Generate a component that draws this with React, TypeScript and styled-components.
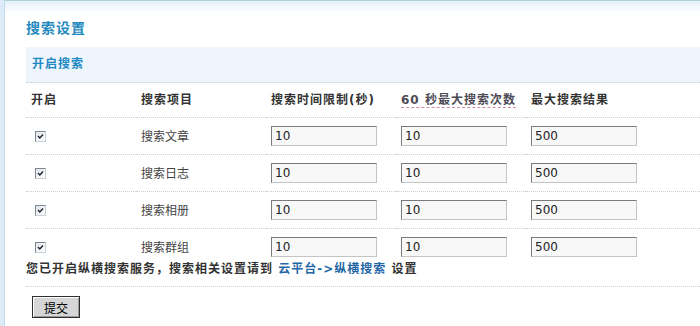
import React from "react";
import styled, { createGlobalStyle } from "styled-components";

const Global = createGlobalStyle`
  html, body { margin: 0; padding: 0; background: #fff; }
  body {
    font-family: "DejaVu Sans", "Noto Sans CJK SC", sans-serif;
    font-size: 12px;
    color: #333;
  }
`;

const Frame = styled.div`
  background: #dcebf6;
  padding-left: 4px;
  min-height: 326px;
  box-sizing: border-box;
`;

const Panel = styled.div`
  min-height: 326px;
  box-sizing: border-box;
  border-left: 1px solid #c4dbe9;
  border-top: 1px solid #b3cedd;
  background: linear-gradient(#e4eff8 0, #ffffff 12px);
  padding: 19px 0 0 21px;
`;

const Title = styled.h2`
  margin: 0 0 11px;
  font-size: 14px;
  line-height: 16px;
  font-weight: bold;
  color: #2389c0;
  letter-spacing: 1px;
`;

const SectionBar = styled.div`
  height: 35px;
  line-height: 35px;
  padding-left: 6px;
  background: #eef5fc;
  border-bottom: 1px dotted #cfcfcf;
  font-weight: bold;
  color: #1d89c2;
  letter-spacing: 1px;
`;

const Table = styled.table`
  width: 100%;
  border-collapse: collapse;
  table-layout: fixed;
`;

const HeadCell = styled.th`
  text-align: left;
  font-weight: bold;
  padding: 8px 5px;
  line-height: 18px;
  border-bottom: 1px dotted #cfcfcf;
  letter-spacing: 1px;
  color: #333;
  white-space: nowrap;
`;

const Cell = styled.td<{ $last?: boolean }>`
  padding: 8px 5px ${(p) => (p.$last ? "0" : "8px")};
  line-height: 20px;
  border-bottom: ${(p) => (p.$last ? "none" : "1px dotted #cfcfcf")};
  color: #444;
  vertical-align: middle;
  font-family: "Noto Sans CJK SC", sans-serif;
`;

const Hint = styled.span`
  border-bottom: 1px dashed #d48aa2;
  color: #4e4a57;
  cursor: help;
`;

const CheckWrap = styled.label`
  display: block;
  width: 11px;
  height: 11px;
  margin-left: 4px;
  position: relative;
`;

const HiddenInput = styled.input`
  position: absolute;
  opacity: 0;
  margin: 0;
  width: 11px;
  height: 11px;
`;

const CheckBox = styled.span`
  display: block;
  width: 11px;
  height: 11px;
  box-sizing: border-box;
  border: 1px solid;
  border-color: #7e8a93 #c9cfd3 #c9cfd3 #7e8a93;
  background: linear-gradient(135deg, #e2e6ea, #ffffff);
  svg { display: block; }
`;

const TextInput = styled.input`
  display: block;
  width: 106px;
  height: 20px;
  box-sizing: border-box;
  margin: 0;
  padding: 0 3px;
  border: 1px solid;
  border-color: #7a7a7a #c4c4c4 #c4c4c4 #7a7a7a;
  background: #f8f8f8;
  font-family: "DejaVu Sans", sans-serif;
  font-size: 12px;
  color: #222;
  outline: none;
`;

const Notice = styled.div`
  padding: 4px 0 9px;
  line-height: 16px;
  font-weight: bold;
  letter-spacing: 1px;
  border-bottom: 1px dotted #cfcfcf;
  color: #333;
`;

const Link = styled.a`
  color: #2467a6;
  text-decoration: none;
`;

const Actions = styled.div`
  padding: 9px 0 0 6px;
`;

const Button = styled.button`
  width: 48px;
  height: 22px;
  padding: 0;
  border: 1px solid #2f2f2f;
  background: #d6d6d6;
  box-shadow: inset 1px 1px 0 #ffffff, inset -1px -1px 0 #9a9a9a;
  font-family: "Noto Sans CJK SC", sans-serif;
  font-size: 12px;
  color: #000;
`;

const rows = [
  { name: "搜索文章", time: "10", count: "10", max: "500" },
  { name: "搜索日志", time: "10", count: "10", max: "500" },
  { name: "搜索相册", time: "10", count: "10", max: "500" },
  { name: "搜索群组", time: "10", count: "10", max: "500" },
];

function Check() {
  return (
    <CheckWrap>
      <HiddenInput type="checkbox" defaultChecked />
      <CheckBox>
        <svg width="9" height="9" viewBox="0 0 9 9">
          <polyline points="2,4 3.8,6 7,2.5" fill="none" stroke="#1d2330" strokeWidth="1.4" />
        </svg>
      </CheckBox>
    </CheckWrap>
  );
}

export default function App() {
  return (
    <>
      <Global />
      <Frame>
        <Panel>
          <Title>搜索设置</Title>
          <SectionBar>开启搜索</SectionBar>
          <Table>
            <colgroup>
              <col style={{ width: 110 }} />
              <col style={{ width: 130 }} />
              <col style={{ width: 130 }} />
              <col style={{ width: 130 }} />
              <col />
            </colgroup>
            <thead>
              <tr>
                <HeadCell>开启</HeadCell>
                <HeadCell>搜索项目</HeadCell>
                <HeadCell>搜索时间限制(秒)</HeadCell>
                <HeadCell>
                  <Hint>60 秒最大搜索次数</Hint>
                </HeadCell>
                <HeadCell>最大搜索结果</HeadCell>
              </tr>
            </thead>
            <tbody>
              {rows.map((r, i) => {
                const last = i === rows.length - 1;
                return (
                  <tr key={r.name}>
                    <Cell $last={last}>
                      <Check />
                    </Cell>
                    <Cell $last={last}>{r.name}</Cell>
                    <Cell $last={last}>
                      <TextInput defaultValue={r.time} />
                    </Cell>
                    <Cell $last={last}>
                      <TextInput defaultValue={r.count} />
                    </Cell>
                    <Cell $last={last}>
                      <TextInput defaultValue={r.max} />
                    </Cell>
                  </tr>
                );
              })}
            </tbody>
          </Table>
          <Notice>
            您已开启纵横搜索服务，搜索相关设置请到 <Link href="#">云平台-&gt;纵横搜索</Link> 设置
          </Notice>
          <Actions>
            <Button type="submit">提交</Button>
          </Actions>
        </Panel>
      </Frame>
    </>
  );
}
